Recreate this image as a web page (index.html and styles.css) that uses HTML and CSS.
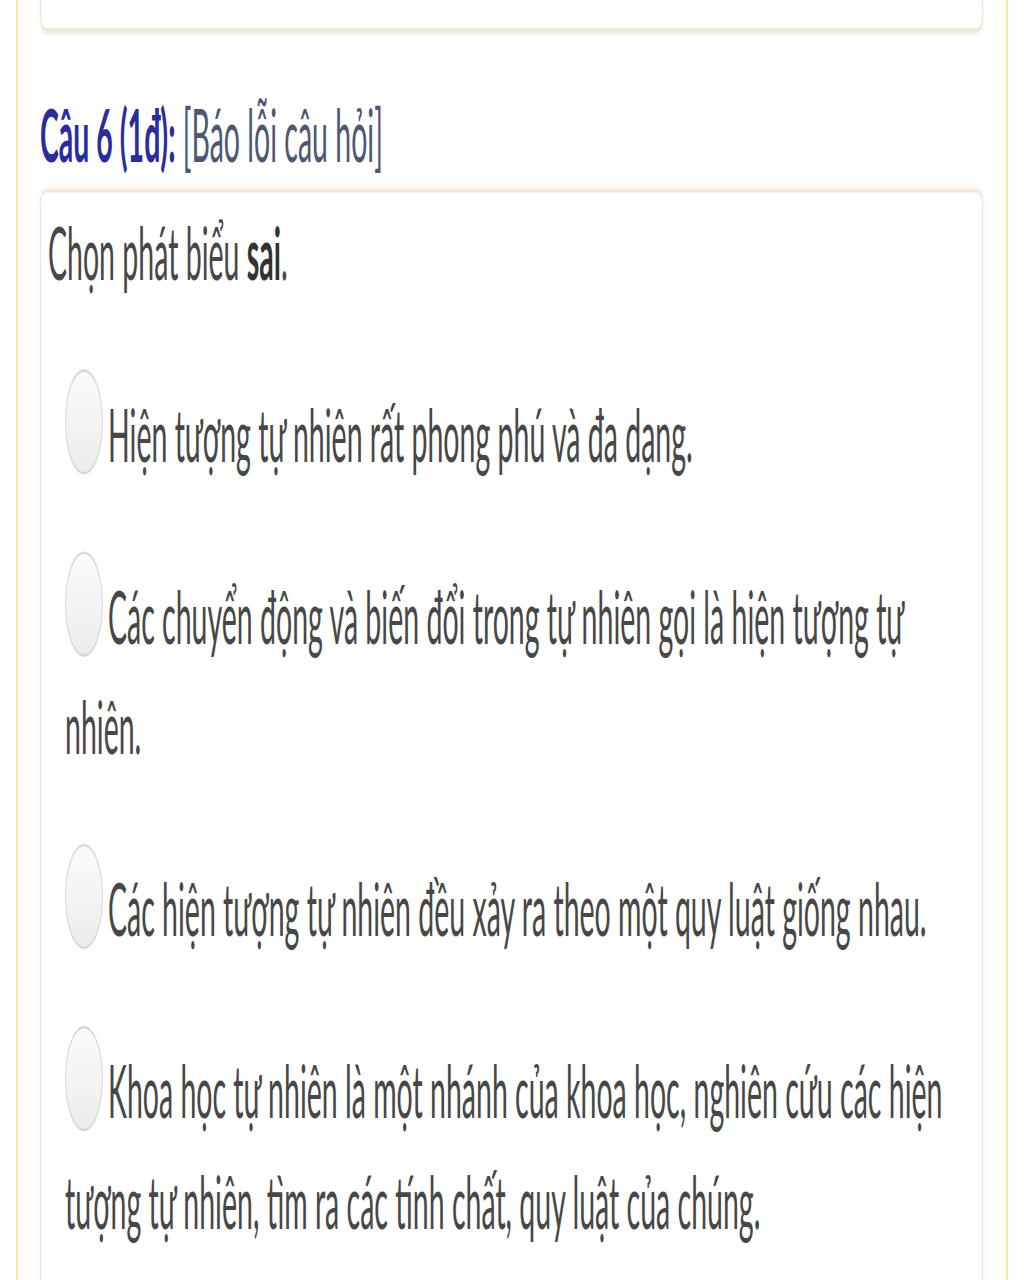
FILE: index.html
```html
<!DOCTYPE html>
<html lang="vi">
<head>
<meta charset="utf-8">
<title>Câu 6</title>
<link rel="stylesheet" href="styles.css">
</head>
<body>
<div class="viewport">
<div class="stretch">
  <div class="frame">
    <div class="card card-prev"></div>
    <div class="q-title"><b class="q-num">Câu 6 (1đ):</b> <span class="q-report">[Báo lỗi câu hỏi]</span></div>
    <div class="card card-q">
      <div class="q-text">Chọn phát biểu <b>sai</b>.</div>
      <div class="opt"><span class="radio"></span>Hiện tượng tự nhiên rất phong phú và đa dạng.</div>
      <div class="opt"><span class="radio"></span>Các chuyển động và biến đổi trong tự nhiên gọi là hiện tượng tự nhiên.</div>
      <div class="opt"><span class="radio"></span>Các hiện tượng tự nhiên đều xảy ra theo một quy luật giống nhau.</div>
      <div class="opt"><span class="radio"></span>Khoa học tự nhiên là một nhánh của khoa học, nghiên cứu các hiện tượng tự nhiên, tìm ra các tính chất, quy luật của chúng.</div>
    </div>
  </div>
</div>
</div>
</body>
</html>
```
FILE: styles.css
```css
html, body {
  margin: 0;
  padding: 0;
  background: #ffffff;
}
.viewport {
  width: 1024px;
  height: 1280px;
  overflow: hidden;
}
.stretch {
  transform: scale(1, 2.565);
  transform-origin: 0 0;
  width: 1024px;
  height: 510px;
  font-family: Lato, "Open Sans", sans-serif;
  font-size: 28.5px;
  font-weight: 400;
  line-height: 43px;
  color: #474747;
}
.frame {
  margin: 0 16px;
  height: 510px;
  border-left: 2px solid #f1e8a6;
  border-right: 2px solid #f1e8a6;
  padding: 0 23px 0 22px;
}
.card {
  background: #fff;
  border: 1px solid #efe6da;
  border-radius: 6px;
  box-shadow: 0 -1px 3px rgba(230, 210, 180, 0.35);
}
.card-prev {
  height: 11px;
  border-top: none;
  border-radius: 0 0 6px 6px;
  box-shadow: 0 1px 2px rgba(220, 200, 170, 0.4);
}
.q-title {
  margin: 19px 0 0 0;
}
.q-num {
  color: #2b2c9c;
  font-weight: 700;
}
.q-report {
  color: #4f5672;
}
.card-q {
  padding: 2px 20px 40px 7px;
  height: 600px;
  border-bottom: none;
}
.q-text b {
  color: #333;
  font-weight: 700;
}
.opt {
  margin: 28px 0 0 17px;
}
.radio {
  display: inline-block;
  width: 36px;
  height: 39px;
  margin-top: -5px;
  border: 1px solid #d9d9d9;
  border-radius: 50%;
  background: linear-gradient(#fbfbfb, #ececec);
  vertical-align: -5px;
  margin-right: 5px;
}
```
